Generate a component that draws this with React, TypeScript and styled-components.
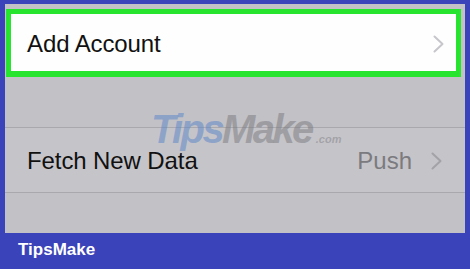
import React from 'react';
import styled, { createGlobalStyle } from 'styled-components';

const GlobalStyle = createGlobalStyle`
  html, body {
    margin: 0;
    padding: 0;
    background: #3a43b9;
  }
  body {
    font-family: 'Liberation Sans', Arial, Helvetica, sans-serif;
  }
`;

const Frame = styled.div`
  width: 470px;
  height: 269px;
  background: #3a43b9;
  display: flex;
  flex-direction: column;
  overflow: hidden;
`;

const Screen = styled.div`
  position: relative;
  margin: 4px 5px 0 5px;
  height: 229px;
  background: #c2c1c6;
  display: flex;
  flex-direction: column;
`;

const Highlight = styled.div`
  margin: 5px 4px 0 1px;
  border: 5px solid #27e52f;
  border-bottom-width: 6px;
  background: #fefefe;
`;

const Row = styled.div<{ $divided?: boolean; $height: number; $padRight: number; $padLeft: number }>`
  display: flex;
  align-items: center;
  height: ${(p) => p.$height}px;
  padding: 2px ${(p) => p.$padRight}px 0 ${(p) => p.$padLeft}px;
  box-sizing: border-box;
  border-top: ${(p) => (p.$divided ? '1px solid #a9a8ad' : 'none')};
  border-bottom: ${(p) => (p.$divided ? '1px solid #a9a8ad' : 'none')};
  background: ${(p) => (p.$divided ? '#c5c4c9' : 'transparent')};
`;

const Label = styled.span`
  flex: 1;
  font-size: 24px;
  color: #111;
  letter-spacing: -0.1px;
`;

const Detail = styled.span`
  font-size: 24px;
  color: #7b7b7f;
  margin-right: 19px;
`;

const Spacer = styled.div<{ $h: number }>`
  height: ${(p) => p.$h}px;
`;

const Watermark = styled.div`
  position: absolute;
  left: 146px;
  top: 105px;
  font-family: 'Liberation Sans', Arial, sans-serif;
  font-weight: 700;
  font-style: italic;
  font-size: 40px;
  letter-spacing: -2.6px;
  line-height: 1;
  pointer-events: none;
  white-space: nowrap;
`;

const WmTips = styled.span`
  color: rgba(95, 135, 200, 0.55);
`;

const WmMake = styled.span`
  color: rgba(120, 120, 125, 0.5);
`;

const WmCom = styled.span`
  font-size: 11px;
  letter-spacing: 0;
  color: rgba(120, 120, 125, 0.45);
  margin-left: 4px;
`;

const Footer = styled.div`
  flex: 1;
  display: flex;
  align-items: center;
  padding-left: 18px;
  padding-bottom: 2px;
  color: #ffffff;
  font-weight: 700;
  font-size: 17px;
`;

const Chevron = ({ color }: { color: string }) => (
  <svg width="11" height="18" viewBox="0 0 11 18" fill="none">
    <polyline points="1.5,1.5 9.5,9 1.5,16.5" stroke={color} strokeWidth="2" strokeLinecap="round" strokeLinejoin="round" />
  </svg>
);

export default function App() {
  return (
    <>
      <GlobalStyle />
      <Frame>
        <Screen>
          <Highlight>
            <Row $height={57} $padLeft={16} $padRight={12}>
              <Label>Add Account</Label>
              <Chevron color="#c6c6cb" />
            </Row>
          </Highlight>
          <Spacer $h={50} />
          <Row $divided $height={66} $padLeft={22} $padRight={23}>
            <Label>Fetch New Data</Label>
            <Detail>Push</Detail>
            <Chevron color="#a2a2a7" />
          </Row>
          <Watermark>
            <WmTips>Tips</WmTips>
            <WmMake>Make</WmMake>
            <WmCom>.com</WmCom>
          </Watermark>
        </Screen>
        <Footer>TipsMake</Footer>
      </Frame>
    </>
  );
}
